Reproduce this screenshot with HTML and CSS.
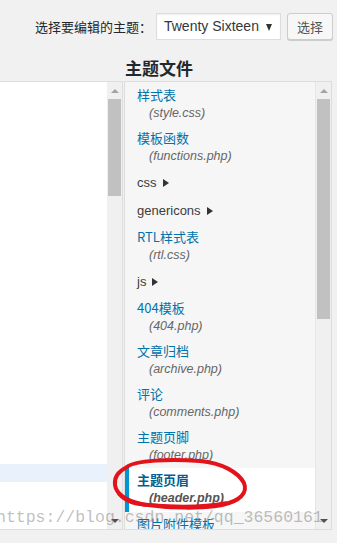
FILE: index.html
```html
<!DOCTYPE html>
<html lang="zh-CN">

<head>
    <meta charset="UTF-8">
    <meta name="viewport" content="width=device-width, initial-scale=1.0">
    <title>编辑主题</title>
    <link rel="stylesheet" href="styles.css">
</head>

<body>
    <div class="theme-bar">
        <label>选择要编辑的主题：</label>
        <div class="select">Twenty Sixteen<span class="caret"></span></div>
        <button class="btn">选择</button>
    </div>

    <h2 class="side-title">主题文件</h2>

    <div class="editor-wrap">
        <div class="editor">
            <div class="code">
                <div class="active-line"></div>
            </div>
            <div class="scrollbar">
                <span class="arr up"></span>
                <span class="thumb short"></span>
                <span class="fill"></span>
                <span class="arr down"></span>
            </div>
        </div>

        <div class="files">
            <ul class="file-list">
                <li class="file"><a>样式表</a><span class="fname">(style.css)</span></li>
                <li class="file"><a>模板函数</a><span class="fname">(functions.php)</span></li>
                <li class="folder">css<span class="tri"></span></li>
                <li class="folder">genericons<span class="tri"></span></li>
                <li class="file"><a>RTL样式表</a><span class="fname">(rtl.css)</span></li>
                <li class="folder">js<span class="tri"></span></li>
                <li class="file"><a>404模板</a><span class="fname">(404.php)</span></li>
                <li class="file"><a>文章归档</a><span class="fname">(archive.php)</span></li>
                <li class="file"><a>评论</a><span class="fname">(comments.php)</span></li>
                <li class="file"><a>主题页脚</a><span class="fname">(footer.php)</span></li>
                <li class="file current"><a>主题页眉</a><span class="fname">(header.php)</span></li>
                <li class="file"><a>图片附件模板</a><span class="fname">(image.php)</span></li>
            </ul>
            <div class="scrollbar">
                <span class="arr up"></span>
                <span class="thumb long"></span>
                <span class="fill"></span>
                <span class="arr down"></span>
            </div>
        </div>
    </div>

    <!-- red hand-drawn mark over the current file -->
    <svg class="mark" width="337" height="543" viewBox="0 0 337 543">
        <path d="M127 467 C135 460 170 459 200 461 C222 463 238 472 244 483 C248 493 240 501 222 505 C200 509 170 508 148 505 C130 503 116 495 115 485 C114 477 119 471 127 467"
            fill="none" stroke="#e3131b" stroke-width="4" stroke-linecap="round" />
        <path d="M119 494 C126 502 138 505 150 505 C175 507 205 507 226 503"
            fill="none" stroke="#e3131b" stroke-width="3.5" stroke-linecap="round" />
    </svg>

    <div class="watermark">https://blog.csdn.net/qq_36560161</div>
</body>

</html>
```

FILE: styles.css
```css
body {
    margin: 0;
    background: #f1f1f1;
    font-family: 'Liberation Sans', 'Noto Sans CJK SC', sans-serif;
    font-size: 13px;
    color: #444;
    position: relative;
    width: 337px;
    height: 543px;
    overflow: hidden;
}

/* top row */
.theme-bar {
    display: flex;
    justify-content: flex-end;
    align-items: center;
    padding: 13px 4px 0 0;
    height: 27px;
}

.theme-bar label {
    font-family: 'Noto Sans CJK SC', sans-serif;
    font-size: 13px;
    color: #23282d;
    margin-right: 4px;
}

.select {
    box-sizing: border-box;
    width: 125px;
    height: 27px;
    background: #fff;
    border: 1px solid #ddd;
    box-shadow: inset 0 1px 2px rgba(0, 0, 0, 0.07);
    font-size: 14px;
    color: #32373c;
    line-height: 25px;
    padding-left: 7px;
    position: relative;
}

.caret {
    position: absolute;
    right: 8px;
    top: 10px;
    border-left: 3.5px solid transparent;
    border-right: 3.5px solid transparent;
    border-top: 7px solid #333;
}

.btn {
    box-sizing: border-box;
    height: 27px;
    margin-left: 6px;
    padding: 0 9px;
    background: #f7f7f7;
    border: 1px solid #ccc;
    border-radius: 3px;
    box-shadow: 0 1px 0 #ccc;
    font-family: 'Noto Sans CJK SC', sans-serif;
    font-size: 13px;
    color: #555;
}

.side-title {
    margin: 18px 0 3px 125px;
    font-family: 'Noto Sans CJK SC', sans-serif;
    font-size: 17px;
    line-height: 20px;
    font-weight: bold;
    color: #23282d;
}

/* editor + file list */
.editor-wrap {
    display: flex;
    height: 449px;
}

.editor {
    box-sizing: border-box;
    width: 123px;
    display: flex;
    background: #fff;
    border: 1px solid #ddd;
    border-left: none;
}

.code {
    flex: 1;
    padding-top: 382px;
}

.active-line {
    height: 18px;
    background: #e8f1fc;
}

.scrollbar {
    width: 15px;
    display: flex;
    flex-direction: column;
    align-items: center;
    background: #f0f0f0;
}

.arr {
    height: 17px;
    width: 15px;
    display: flex;
    justify-content: center;
    align-items: center;
}

.arr::before {
    content: "";
    border-left: 4px solid transparent;
    border-right: 4px solid transparent;
}

.arr.up::before {
    border-bottom: 4px solid #a3a3a3;
}

.arr.down::before {
    border-top: 4px solid #505050;
}

.thumb {
    width: 13px;
    background: #c1c1c1;
}

.thumb.short {
    height: 97px;
}

.thumb.long {
    height: 220px;
}

.fill {
    flex: 1;
}

.files {
    box-sizing: border-box;
    width: 208px;
    margin-left: 1px;
    display: flex;
    background: #f6f6f6;
    border: 1px solid #ddd;
}

.files .scrollbar {
    width: 16px;
    border-left: 1px solid #e6e6e6;
    box-sizing: border-box;
}

.file-list {
    flex: 1;
    list-style: none;
    margin: 0;
    padding: 1px 0 0;
    overflow: hidden;
}

.file {
    padding: 3px 0 3px 12px;
}

.file a {
    display: block;
    line-height: 18px;
    color: #0073aa;
    font-family: 'Noto Sans CJK SC', sans-serif;
}

.fname {
    display: block;
    line-height: 19px;
    padding-left: 12px;
    font-size: 12.5px;
    font-style: italic;
    color: #666;
}

.file.current {
    background: #fff;
    border-left: 4px solid #0095d3;
    padding: 3px 0 4px 8px;
}

.file.current a {
    color: #005f8f;
    font-weight: bold;
}

.file.current .fname {
    font-weight: bold;
    color: #555;
}

.folder {
    padding: 4px 12px;
    line-height: 20px;
    color: #3c3c3c;
    display: flex;
    align-items: center;
}

.tri {
    margin-left: 6px;
    border-top: 4px solid transparent;
    border-bottom: 4px solid transparent;
    border-left: 6px solid #333;
}

/* overlays from the screenshot */
.mark {
    position: absolute;
    left: 0;
    top: 0;
    pointer-events: none;
}

.watermark {
    position: absolute;
    left: -4px;
    top: 508px;
    font-family: 'Liberation Mono', monospace;
    font-size: 16.5px;
    color: rgba(100, 100, 100, 0.42);
    white-space: nowrap;
    pointer-events: none;
}
```
